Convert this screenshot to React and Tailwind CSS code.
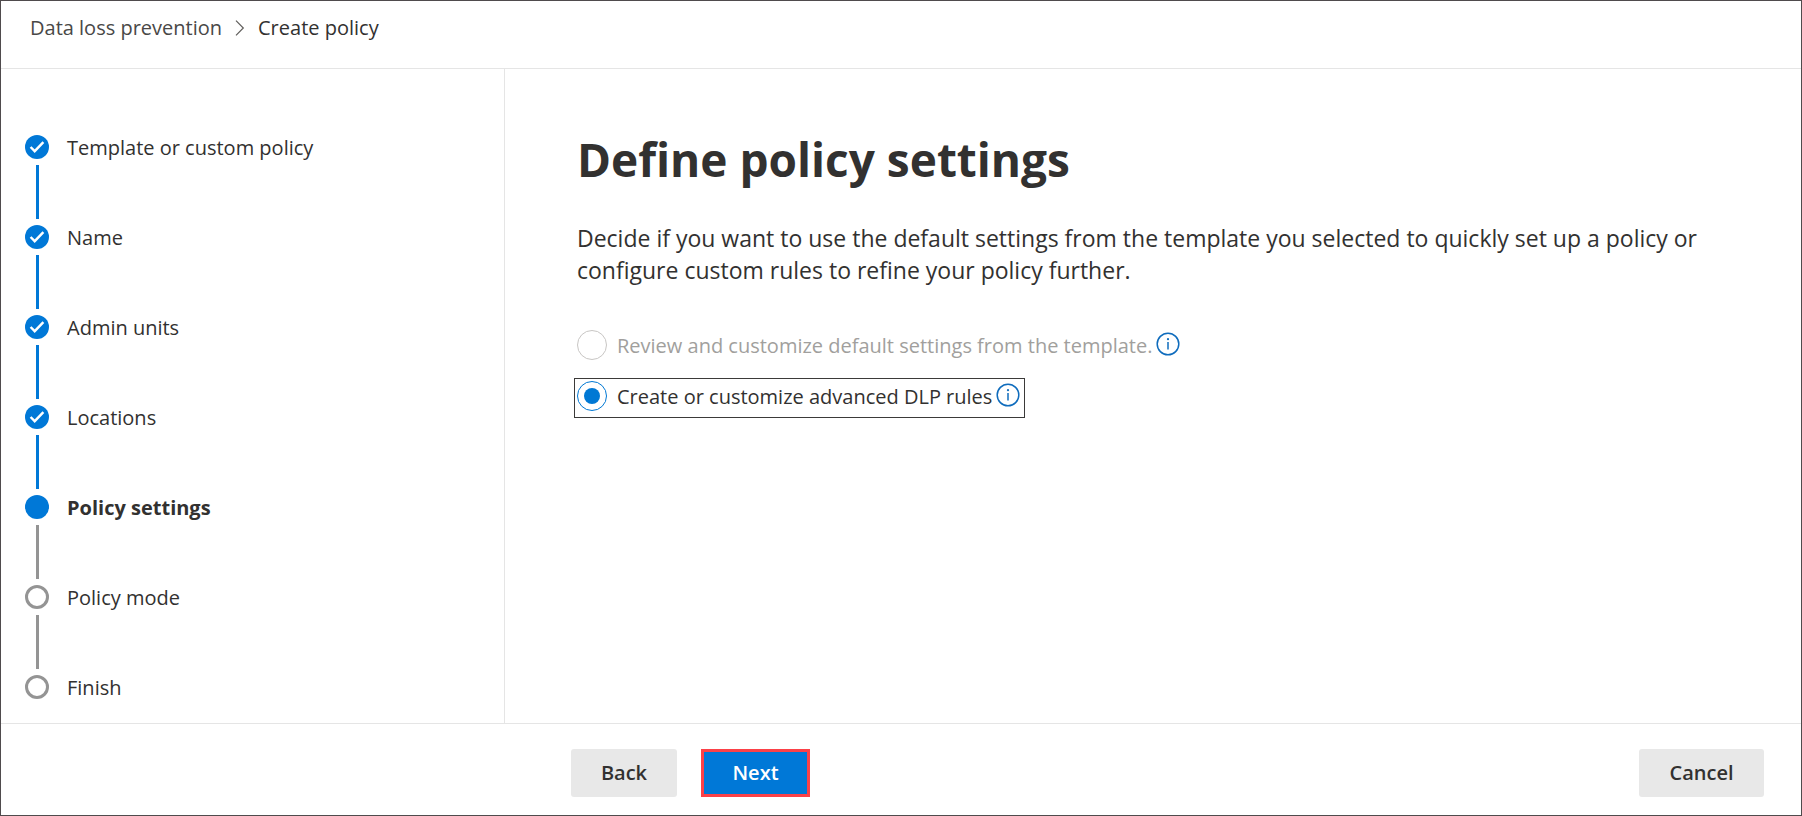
import React from "react";

const steps = [
  { label: "Template or custom policy", state: "done" },
  { label: "Name", state: "done" },
  { label: "Admin units", state: "done" },
  { label: "Locations", state: "done" },
  { label: "Policy settings", state: "current" },
  { label: "Policy mode", state: "todo" },
  { label: "Finish", state: "todo" },
];

function StepMarker({ state }) {
  if (state === "todo") {
    return <span className="size-6 rounded-full border-3 border-[#949494]" />;
  }
  return (
    <span className="flex size-6 items-center justify-center rounded-full bg-[#0078d7]">
      {state === "done" && (
        <svg viewBox="0 0 24 24" className="size-6" fill="none" stroke="#fff" strokeWidth="2.4" aria-hidden="true">
          <path d="M5.6 12l4.1 4.2L18.4 7.2" />
        </svg>
      )}
    </span>
  );
}

function Steps() {
  return (
    <ol>
      {steps.map((step, i) => (
        <li key={step.label} className="flex gap-[18px]">
          <div className="flex flex-col items-center gap-1.5">
            <StepMarker state={step.state} />
            {i < steps.length - 1 && (
              <span className={`mb-1.5 h-[54px] w-[3px] ${step.state === "done" ? "bg-[#0078d7]" : "bg-[#949494]"}`} />
            )}
          </div>
          <a
            href="#step"
            aria-current={step.state === "current" ? "step" : undefined}
            className={`h-6 text-[20px] leading-[26px] ${step.state === "current" ? "font-bold" : ""}`}
          >
            {step.label}
          </a>
        </li>
      ))}
    </ol>
  );
}

function InfoButton({ label }) {
  return (
    <button type="button" aria-label={label} className="size-6 text-[#0f6cbd]">
      <svg viewBox="0 0 24 24" className="size-6" fill="none" stroke="currentColor" strokeWidth="1.5" aria-hidden="true">
        <circle cx="12" cy="12" r="10.8" />
        <path d="M12 10v7.5" />
        <circle cx="12" cy="7.2" r="1.1" fill="currentColor" stroke="none" />
      </svg>
    </button>
  );
}

function Option({ id, label, className, ...input }) {
  return (
    <div className={`flex w-fit items-start border pt-0.5 pr-1 pl-0.5 ${className}`}>
      <input
        type="radio"
        name="settings"
        id={id}
        className="size-[30px] shrink-0 appearance-none rounded-full border border-[#c8c6c4] bg-clip-content p-1.5 outline-none checked:border-[#0078d4] checked:bg-[#0078d4]"
        {...input}
      />
      <label htmlFor={id} className="ml-2.5 text-[20px] leading-8">
        {label}
      </label>
      <span className="mt-0.5 ml-1 flex">
        <InfoButton label={`About: ${label}`} />
      </span>
    </div>
  );
}

export default function App() {
  return (
    <div className="flex min-h-screen flex-col border border-[#4f4b4d] bg-white font-['Open_Sans','Noto_Sans',sans-serif] text-[#323130]">
      <header className="border-b border-[#e5e5e5] pt-[13px] pb-[27px] pl-[29px]">
        <nav aria-label="Breadcrumb" className="flex items-center text-[20px] leading-[27px]">
          <a href="#dlp" className="text-[#494847]">Data loss prevention</a>
          <svg viewBox="0 0 10 16" className="mx-[13px] h-4 w-2.5" fill="none" stroke="#605e5c" strokeWidth="1.2" aria-hidden="true">
            <path d="M1 .7L8.3 8L1 15.3" />
          </svg>
          <a href="#create" aria-current="page">Create policy</a>
        </nav>
      </header>

      <div className="flex grow">
        <aside className="w-[504px] shrink-0 border-r border-[#e5e5e5] pt-[66px] pl-6">
          <Steps />
        </aside>
        <main className="min-w-0 grow pt-[58px] pr-[100px] pl-[69px]">
          <h1 className="pl-[3px] text-[46px] leading-[64px] font-bold">Define policy settings</h1>
          <p className="mt-[31px] pl-[3px] text-[23px] leading-8">
            Decide if you want to use the default settings from the template you selected to quickly set up a policy or
            configure custom rules to refine your policy further.
          </p>
          <div className="mt-[41px] flex flex-col gap-3">
            <Option
              id="review"
              label="Review and customize default settings from the template."
              className="h-[39px] border-transparent text-[#a19f9d]"
              disabled
            />
            <Option
              id="advanced"
              label="Create or customize advanced DLP rules"
              className="h-10 border-[#3b3a39]"
              defaultChecked
            />
          </div>
        </main>
      </div>

      <footer className="flex items-center border-t border-[#e5e5e5] pt-[25px] pr-[37px] pb-[18px] pl-[570px] text-[20px] font-semibold">
        <button type="button" className="h-12 w-[106px] rounded-[3px] bg-[#e8e8e8]">Back</button>
        <button type="button" className="ml-6 h-12 w-[109px] border-3 border-[#fb4148] bg-[#0078d7] text-white">Next</button>
        <button type="button" className="ml-auto h-12 w-[125px] rounded-[3px] bg-[#e8e8e8]">Cancel</button>
      </footer>
    </div>
  );
}
